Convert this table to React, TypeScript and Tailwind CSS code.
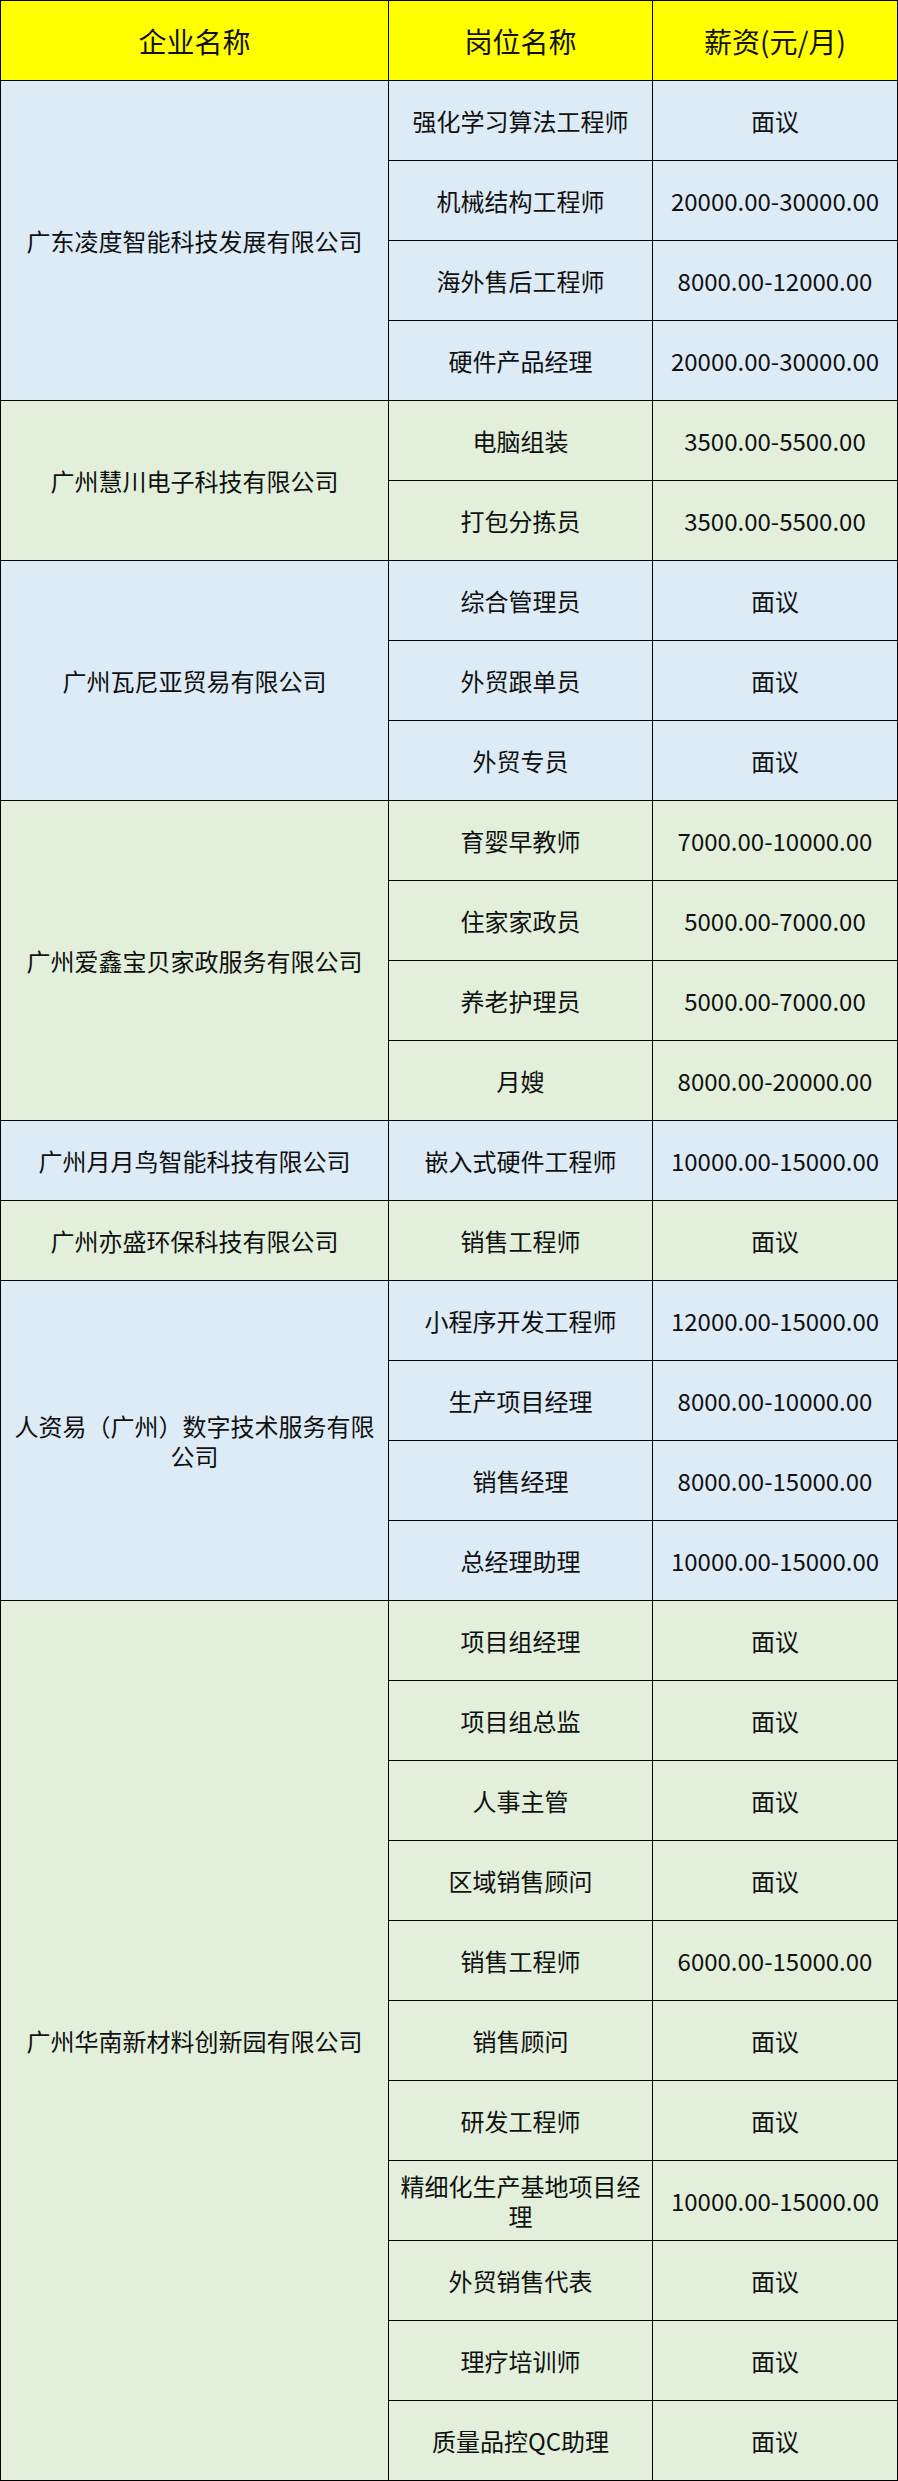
import React from "react";

type Job = { title: string; pay: string };
type Group = { company: string; color: "blue" | "green"; jobs: Job[] };

const NY = "面议";

const groups: Group[] = [
  {
    company: "广东凌度智能科技发展有限公司",
    color: "blue",
    jobs: [
      { title: "强化学习算法工程师", pay: NY },
      { title: "机械结构工程师", pay: "20000.00-30000.00" },
      { title: "海外售后工程师", pay: "8000.00-12000.00" },
      { title: "硬件产品经理", pay: "20000.00-30000.00" },
    ],
  },
  {
    company: "广州慧川电子科技有限公司",
    color: "green",
    jobs: [
      { title: "电脑组装", pay: "3500.00-5500.00" },
      { title: "打包分拣员", pay: "3500.00-5500.00" },
    ],
  },
  {
    company: "广州瓦尼亚贸易有限公司",
    color: "blue",
    jobs: [
      { title: "综合管理员", pay: NY },
      { title: "外贸跟单员", pay: NY },
      { title: "外贸专员", pay: NY },
    ],
  },
  {
    company: "广州爱鑫宝贝家政服务有限公司",
    color: "green",
    jobs: [
      { title: "育婴早教师", pay: "7000.00-10000.00" },
      { title: "住家家政员", pay: "5000.00-7000.00" },
      { title: "养老护理员", pay: "5000.00-7000.00" },
      { title: "月嫂", pay: "8000.00-20000.00" },
    ],
  },
  {
    company: "广州月月鸟智能科技有限公司",
    color: "blue",
    jobs: [{ title: "嵌入式硬件工程师", pay: "10000.00-15000.00" }],
  },
  {
    company: "广州亦盛环保科技有限公司",
    color: "green",
    jobs: [{ title: "销售工程师", pay: NY }],
  },
  {
    company: "人资易（广州）数字技术服务有限公司",
    color: "blue",
    jobs: [
      { title: "小程序开发工程师", pay: "12000.00-15000.00" },
      { title: "生产项目经理", pay: "8000.00-10000.00" },
      { title: "销售经理", pay: "8000.00-15000.00" },
      { title: "总经理助理", pay: "10000.00-15000.00" },
    ],
  },
  {
    company: "广州华南新材料创新园有限公司",
    color: "green",
    jobs: [
      { title: "项目组经理", pay: NY },
      { title: "项目组总监", pay: NY },
      { title: "人事主管", pay: NY },
      { title: "区域销售顾问", pay: NY },
      { title: "销售工程师", pay: "6000.00-15000.00" },
      { title: "销售顾问", pay: NY },
      { title: "研发工程师", pay: NY },
      { title: "精细化生产基地项目经理", pay: "10000.00-15000.00" },
      { title: "外贸销售代表", pay: NY },
      { title: "理疗培训师", pay: NY },
      { title: "质量品控QC助理", pay: NY },
    ],
  },
];

export default function App() {
  return (
    <div className="w-[898px] bg-white font-['Noto_Sans_CJK_SC','Noto_Sans',sans-serif] text-[#111]">
      <div className="w-[898px] border-t border-l border-black">
        <div className="flex h-[80px] bg-[#ffff00] text-[28px]">
          <div className="w-[388px] border-r border-b border-black flex items-center justify-center">
            企业名称
          </div>
          <div className="w-[264px] border-r border-b border-black flex items-center justify-center">
            岗位名称
          </div>
          <div className="flex-1 border-r border-b border-black flex items-center justify-center">
            薪资(元/月)
          </div>
        </div>
        {groups.map((g, gi) => (
          <div
            key={gi}
            className={
              "flex text-[24px] " +
              (g.color === "blue" ? "bg-[#ddebf7]" : "bg-[#e2efda]")
            }
          >
            <div className="w-[388px] border-r border-b border-black flex items-center justify-center px-[12px] text-center leading-[30px]">
              {g.company}
            </div>
            <div className="flex-1 flex flex-col">
              {g.jobs.map((j, ji) => (
                <div key={ji} className="flex h-[80px]">
                  <div className="w-[264px] border-r border-b border-black flex items-center justify-center px-[4px] text-center leading-[30px]">
                    {j.title}
                  </div>
                  <div className="flex-1 border-r border-b border-black flex items-center justify-center text-center">
                    {j.pay}
                  </div>
                </div>
              ))}
            </div>
          </div>
        ))}
      </div>
    </div>
  );
}
